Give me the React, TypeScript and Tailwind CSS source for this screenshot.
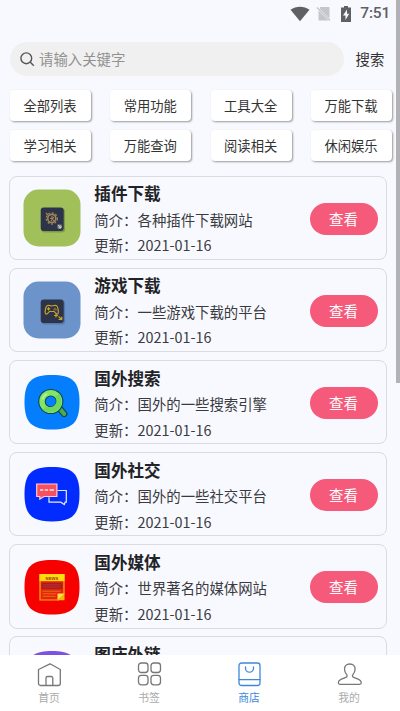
import type { ReactNode } from "react";

const categories = [
  "全部列表",
  "常用功能",
  "工具大全",
  "万能下载",
  "学习相关",
  "万能查询",
  "阅读相关",
  "休闲娱乐",
];

type Item = {
  title: string;
  desc?: string;
  date?: string;
  icon: ReactNode;
};

function PluginIcon() {
  return (
    <svg viewBox="0 0 58 58" className="w-full h-full">
      <rect x="0.5" y="0.5" width="57" height="57" rx="15" fill="#a2c05a" />
      <rect x="18.500" y="19.500" width="23.500" height="24" rx="3" fill="#7f9a45" />
      <rect x="17.700" y="18.500" width="23" height="23.500" rx="3" fill="#2d3348" />
      <g fill="none" stroke="#a08658">
        <circle cx="28.800" cy="29.500" r="4" strokeWidth="1.600" />
        <circle cx="28.800" cy="29.500" r="5.500" strokeWidth="1.300" strokeDasharray="2 1.600" />
        <path d="M23 24l2 2M27 29.500h2v-2.500M30 31l2 1.500M28 32l3-4" strokeWidth="1.200" />
      </g>
      <path d="M34.500 35.500h4v4h-4z" fill="#858786" />
      <path d="M35 36l3 3m0-2.500V39h-2.500" stroke="#e3dfcb" strokeWidth="0.800" fill="none" />
    </svg>
  );
}

function GameIcon() {
  return (
    <svg viewBox="0 0 58 58" className="w-full h-full">
      <rect x="0.500" y="0.500" width="57" height="57" rx="15" fill="#6d94ca" />
      <rect x="18.500" y="19.500" width="23.500" height="24" rx="3" fill="#5579aa" />
      <rect x="17.700" y="18.500" width="23" height="23.500" rx="3" fill="#2d3348" />
      <g fill="none" stroke="#c9a52a" strokeWidth="1.200" strokeLinecap="round" strokeLinejoin="round">
        <path d="M24.500 24.500c2-.8 2 .5 4.300.5s2.500-1.300 4.500-.5c1.800.8 2.400 6.500 1.700 8-.8 1.300-2.200.2-3.700-2h-4.900c-1.500 2.200-3.100 3.300-3.900 2-.8-1.700 0-7.200 2-8z" />
        <path d="M24.300 27.800h2.600M25.600 26.500v2.600M32 27v.2M33 28.700v.1M31 28.700v.1" />
        <path d="M31.500 34.500h3M33 33v3M35.800 35.800l3 2.700m0-2.500v2.500H36" />
      </g>
    </svg>
  );
}

function SearchSiteIcon() {
  return (
    <svg viewBox="0 0 58 58" className="w-full h-full">
      <path
        d="M29 2C49 2 56.500 8 56.500 29S49 56.500 29 56.500 1.500 50 1.500 29 9 2 29 2z"
        fill="#047efc"
      />
      <path d="M37.800 36.800l3.400 4" stroke="#12445a" strokeWidth="6.600" strokeLinecap="round" />
      <path d="M37.800 36.800l3.400 4" stroke="#48ab4f" strokeWidth="4.200" strokeLinecap="round" />
      <circle cx="27.800" cy="28.500" r="8.800" fill="none" stroke="#12445a" strokeWidth="7.600" />
      <circle cx="27.800" cy="28.500" r="8.800" fill="none" stroke="#83e766" strokeWidth="5.400" />
      <path d="M34 22.300a8.800 8.800 0 0 1-12.400 12.400" fill="none" stroke="#6fd95d" strokeWidth="5.200" />
      <path d="M19.500 26.500c.6-2.500 2.200-4.700 4.600-5.700" stroke="#b0f59a" strokeWidth="1.500" fill="none" />
    </svg>
  );
}

function SocialIcon() {
  return (
    <svg viewBox="0 0 58 58" className="w-full h-full">
      <path
        d="M29 2C49 2 56.500 8 56.500 29S49 56.500 29 56.500 1.500 50 1.500 29 9 2 29 2z"
        fill="#022bff"
      />
      <path
        d="M34.500 25.500h8.800v11.700h-1.200l-.8 2.300-3.500-2.300H26v-5"
        fill="none"
        stroke="#e8ebff"
        strokeWidth="1.200"
      />
      <path
        d="M13.700 19h20.200v12.500H21l-4.200 2.600v-2.600h-3.100z"
        fill="#f7505f"
        stroke="#ffc9d2"
        strokeWidth="1.200"
      />
      <path d="M17 25h3.200m1.500 0H25m1.500 0H31" stroke="#ffe3e6" strokeWidth="1.300" />
    </svg>
  );
}

function NewsIcon() {
  return (
    <svg viewBox="0 0 58 58" className="w-full h-full">
      <path
        d="M29 2C49 2 56.500 8 56.500 29S49 56.500 29 56.500 1.500 50 1.500 29 9 2 29 2z"
        fill="#f70000"
      />
      <path d="M17 16.500h24v19.300L35.500 42H17z" fill="#f31d0b" stroke="#f0b60d" strokeWidth="1.200" />
      <rect x="16.500" y="16" width="25" height="7.200" fill="#ffdc0b" />
      <text
        x="28.900"
        y="21.600"
        textAnchor="middle"
        fill="#9b3408"
        className="font-['Liberation_Sans'] font-bold text-[4.200px]"
      >
        NEWS
      </text>
      <rect x="18.500" y="24.800" width="21" height="6.200" fill="#a51e25" />
      <path d="M20 26.800h18M20 29h18" stroke="#cb3a36" strokeWidth="0.600" />
      <path d="M19.500 33.200h18M19.500 35.800h14M19.500 38.300h13" stroke="#c58a12" strokeWidth="0.900" />
      <path d="M34.500 42.300v-6.800h7z" fill="#ffe14a" />
      <path d="M41.500 35.500v6.800h-7z" fill="#f5b90d" />
    </svg>
  );
}

function ImageHostIcon() {
  return (
    <svg viewBox="0 0 58 58" className="w-full h-full">
      <path
        d="M29 1C49 1 56.500 8 56.500 29S49 56.500 29 56.500 1.500 50 1.500 29 9 1 29 1z"
        fill="#7c52e0"
      />
    </svg>
  );
}

const items: Item[] = [
  { title: "插件下载", desc: "各种插件下载网站", date: "2021-01-16", icon: <PluginIcon /> },
  { title: "游戏下载", desc: "一些游戏下载的平台", date: "2021-01-16", icon: <GameIcon /> },
  { title: "国外搜索", desc: "国外的一些搜索引擎", date: "2021-01-16", icon: <SearchSiteIcon /> },
  { title: "国外社交", desc: "国外的一些社交平台", date: "2021-01-16", icon: <SocialIcon /> },
  { title: "国外媒体", desc: "世界著名的媒体网站", date: "2021-01-16", icon: <NewsIcon /> },
  { title: "图床外链", icon: <ImageHostIcon /> },
];

function StatusBar() {
  return (
    <div className="flex h-[27px] shrink-0 items-center justify-end pr-[10px] text-[#5f6063]">
      <svg viewBox="0 0 20 16" className="mr-[6px] h-4 w-5">
        <path d="M.500 3.700C6-.400 14-.400 19.500 3.700L10 15.300z" fill="currentColor" />
      </svg>
      <svg viewBox="0 0 16 16" className="mr-[8px] h-4 w-4">
        <path d="M4 1h9.500v11.500L4 3z" fill="#c5c6cb" />
        <path d="M2.500 4.500L12.500 14.500H2.500z" fill="#c5c6cb" />
        <path d="M1 1.500l13 13" stroke="#c5c6cb" strokeWidth="1.400" />
      </svg>
      <svg viewBox="0 0 12 18" className="mr-[8px] h-[18px] w-3">
        <path d="M4 1h4v1.500h3V17H1V2.500h3z" fill="currentColor" />
        <path d="M7 4.500L3 10.500h2.500V15L9.200 8.800H7z" fill="#f8f9fe" />
      </svg>
      <span className="font-[Roboto,sans-serif] text-[15.500px] leading-[27px] font-medium tracking-[-0.200px]">
        7:51
      </span>
    </div>
  );
}

function Card({ item }: { item: Item }) {
  return (
    <div className="flex h-[84.300px] shrink-0 items-center rounded-[8px] border-[1.500px] border-[#dadbe0] pr-[8.500px] pl-[12.800px]">
      <div className="mt-[0.500px] h-[58px] w-[58px] shrink-0">{item.icon}</div>
      <div className="mt-[3px] ml-[13.500px] h-[78px] flex-1 text-[14.400px] leading-[25.700px] whitespace-nowrap text-[#3a3b3e]">
        <h2 className="text-[16.600px] leading-[26.400px] font-bold text-[#222326]">{item.title}</h2>
        {item.desc && <p>简介：{item.desc}</p>}
        {item.date && <p>更新：{item.date}</p>}
      </div>
      <button className="mt-[2px] h-8 w-[68px] shrink-0 rounded-full bg-[#f65a7b] text-[14.400px] leading-8 text-white">
        查看
      </button>
    </div>
  );
}

function TabBar() {
  const tabs = [
    {
      label: "首页",
      icon: <path d="M13 1.800L23.300 7.500V21.500a2 2 0 0 1-2 2H3.500a2 2 0 0 1-2-2V7.500zM9 23.300v-7.300a1.500 1.500 0 0 1 1.500-1.500h3.800a1.500 1.500 0 0 1 1.500 1.500v7.300" />,
    },
    {
      label: "书签",
      icon: (
        <>
          <rect x="1.500" y="1" width="9.500" height="9.500" rx="2.800" />
          <rect x="14" y="1" width="9.500" height="9.500" rx="2.800" />
          <rect x="1.500" y="13.300" width="9.500" height="9.500" rx="2.800" />
          <rect x="14" y="13.300" width="9.500" height="9.500" rx="2.800" />
        </>
      ),
    },
    {
      label: "商店",
      active: true,
      icon: (
        <>
          <rect x="2" y="1" width="21" height="22.500" rx="2.500" />
          <path d="M2 17.700h21M8.500 5v1.200a4 4 0 0 0 8 0V5" />
        </>
      ),
    },
    {
      label: "我的",
      icon: <path d="M12.800 2c-3.600 0-5.300 2.300-5.300 5 0 2.600 1 4.300 2.200 5.700.8 1 .3 2.300-.8 2.700l-5 2c-1.600.7-2.600 2-2.600 3.400 0 1 .6 1.500 1.600 1.500h19.800c1 0 1.600-.5 1.600-1.500 0-1.400-1-2.700-2.600-3.400l-5-2c-1.100-.4-1.600-1.700-.8-2.700 1.200-1.400 2.200-3.100 2.200-5.700 0-2.700-1.700-5-5.300-5z" />,
    },
  ];

  return (
    <nav className="h-14 shrink-0 bg-white pt-[7px]">
      <div className="-ml-px grid w-[400px] grid-cols-4">
        {tabs.map((tab) => (
          <div
            key={tab.label}
            className={`flex flex-col items-center ${tab.active ? "text-[#3f87dc]" : "text-[#777]"}`}
          >
            <svg
              viewBox="0 0 25 25"
              className="h-[25px] w-[25px]"
              fill="none"
              stroke="currentColor"
              strokeWidth="1.300"
              strokeLinejoin="round"
              strokeLinecap="round"
            >
              {tab.icon}
            </svg>
            <span className={`mt-[2px] text-[10.800px] leading-4 ${tab.active ? "" : "text-[#aaa]"}`}>
              {tab.label}
            </span>
          </div>
        ))}
      </div>
    </nav>
  );
}

export default function App() {
  return (
    <div className="relative flex h-[711px] w-[400px] flex-col overflow-hidden bg-[#f8f9fe] font-['Noto_Sans_CJK_SC',sans-serif]">
      <StatusBar />

      {/* Search */}
      <div className="mt-[15px] flex h-[34px] shrink-0 items-center pl-[10px]">
        <div className="flex h-full w-[334px] items-center rounded-full bg-[#f0f0f0] pl-[10px]">
          <svg viewBox="0 0 15 15" className="h-[15px] w-[15px]" fill="none" stroke="#555" strokeWidth="1.400">
            <circle cx="6.300" cy="6.300" r="5.400" />
            <path d="M10.300 10.300l3.500 3.500" />
          </svg>
          <span className="-mt-px ml-[4px] text-[14.400px] text-[#919191]">请输入关键字</span>
        </div>
        <span className="-mt-px ml-[11.500px] text-[14.400px] text-[#333]">搜索</span>
      </div>

      {/* Categories */}
      <div className="mt-[14px] ml-[10px] grid w-[382px] shrink-0 grid-cols-4 gap-x-[19.300px] gap-y-[9px]">
        {categories.map((name) => (
          <button
            key={name}
            className="h-[31px] rounded-[4px] bg-white pr-px text-[13.300px] leading-[31px] text-[#333] shadow-[1px_1px_2px_#999]"
          >
            {name}
          </button>
        ))}
      </div>

      {/* List */}
      <div className="mt-[14.500px] flex min-h-0 w-[387px] flex-1 flex-col gap-[7.900px] overflow-hidden pl-[9px]">
        {items.map((item) => (
          <Card key={item.title} item={item} />
        ))}
      </div>

      <TabBar />

      {/* Scroll thumb */}
      <div className="absolute top-0 right-0 h-[383px] w-1 bg-[#b2b2b6]" />
    </div>
  );
}
